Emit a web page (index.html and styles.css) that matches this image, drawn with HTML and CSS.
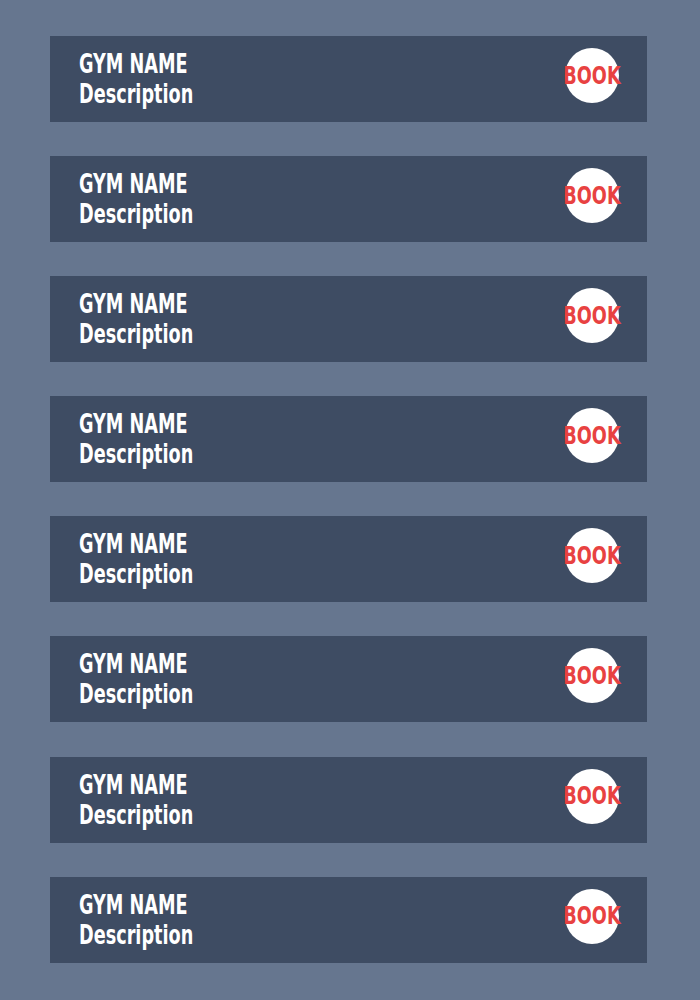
FILE: index.html
```html
<!DOCTYPE html>
<html>
<head>
<meta charset="utf-8">
<link rel="stylesheet" href="styles.css">
</head>
<body>
<div class="list">
  <div class="card"><div class="info"><div class="name">GYM NAME</div><div class="desc">Description</div></div><div class="book"><span>BOOK</span></div></div>
  <div class="card"><div class="info"><div class="name">GYM NAME</div><div class="desc">Description</div></div><div class="book"><span>BOOK</span></div></div>
  <div class="card"><div class="info"><div class="name">GYM NAME</div><div class="desc">Description</div></div><div class="book"><span>BOOK</span></div></div>
  <div class="card"><div class="info"><div class="name">GYM NAME</div><div class="desc">Description</div></div><div class="book"><span>BOOK</span></div></div>
  <div class="card"><div class="info"><div class="name">GYM NAME</div><div class="desc">Description</div></div><div class="book"><span>BOOK</span></div></div>
  <div class="card"><div class="info"><div class="name">GYM NAME</div><div class="desc">Description</div></div><div class="book"><span>BOOK</span></div></div>
  <div class="card"><div class="info"><div class="name">GYM NAME</div><div class="desc">Description</div></div><div class="book"><span>BOOK</span></div></div>
  <div class="card"><div class="info"><div class="name">GYM NAME</div><div class="desc">Description</div></div><div class="book"><span>BOOK</span></div></div>
</div>
</body>
</html>
```

FILE: styles.css
```css
html, body {
  margin: 0;
  padding: 0;
  background: #66768f;
}
body {
  font-family: "DejaVu Sans Condensed", "DejaVu Sans", sans-serif;
  font-weight: bold;
}
.list {
  display: flex;
  flex-direction: column;
  gap: 34.1px;
  padding: 36px 0 0 50px;
  width: 597px;
}
.card {
  height: 86px;
  background: #3e4c63;
  display: flex;
  align-items: center;
  justify-content: space-between;
  padding: 0 28px 0 29px;
  box-sizing: border-box;
}
.info {
  color: #ffffff;
  font-size: 26px;
  line-height: 30px;
  transform: scaleX(0.755);
  transform-origin: left center;
}
.book {
  width: 54px;
  height: 55px;
  border-radius: 50%;
  background: #ffffff;
  color: #e84141;
  font-size: 24px;
  display: flex;
  align-items: center;
  justify-content: center;
  margin-top: -7px;
}
.book span {
  display: block;
  transform: scaleX(0.82);
  white-space: nowrap;
}
```
